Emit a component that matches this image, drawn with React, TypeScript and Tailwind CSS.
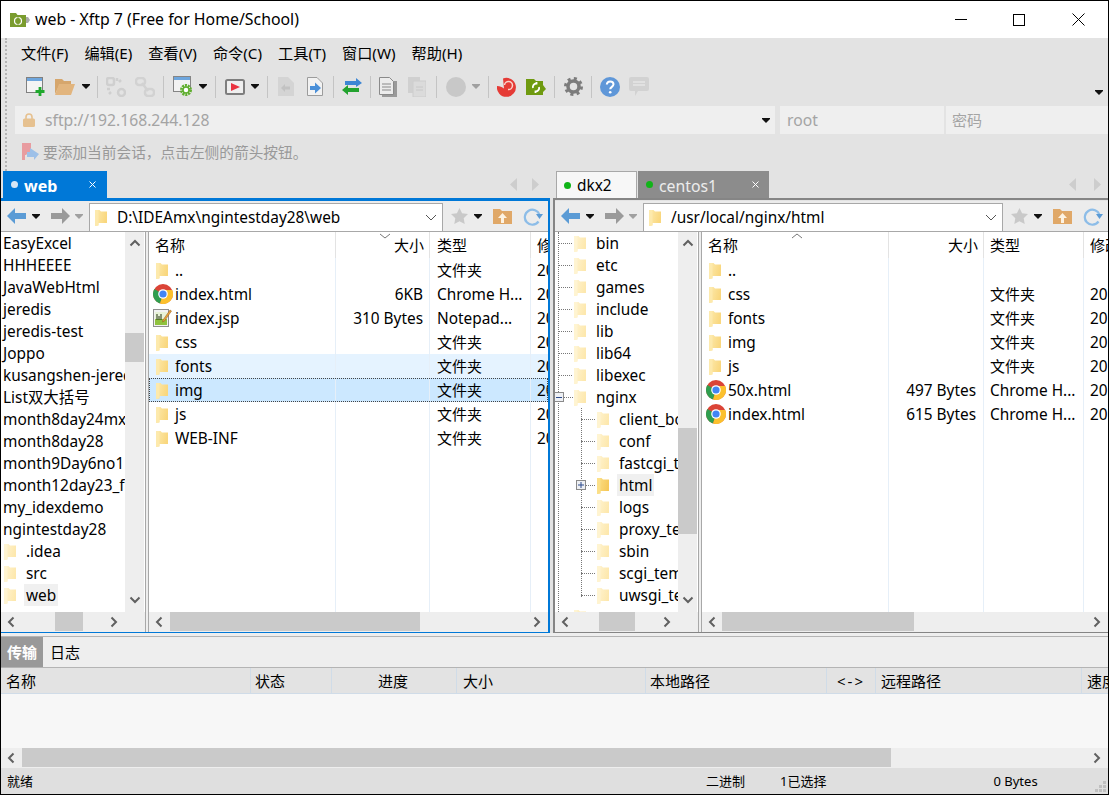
import React from "react";

const Folder = ({ pale = false, strong = false }: { pale?: boolean; strong?: boolean }) => {
  const a = strong ? "#fbe08a" : pale ? "#fff4d2" : "#fdeaae";
  const b = strong ? "#f6c95a" : pale ? "#fde8ae" : "#f9d77e";
  const id = strong ? "fs" : pale ? "fp" : "fn";
  return (
    <svg width="12" height="17" viewBox="0 0 12 17" className="shrink-0">
      <defs>
        <linearGradient id={id} x1="0" y1="0" x2="1" y2="0.3">
          <stop offset="0" stopColor={a} />
          <stop offset="1" stopColor={b} />
        </linearGradient>
      </defs>
      <path d="M0 1h4.5l1.5 1.5H12V14H3.5v2.5L0 17z" fill={`url(#${id})`} />
      <path d="M0 1h3.5v15L0 17z" fill={a} opacity="0.85" />
    </svg>
  );
};

const Chrome = () => (
  <svg width="20" height="20" viewBox="0 0 20 20" className="shrink-0">
    <circle cx="10" cy="10" r="10" fill="#db4437" />
    <path d="M10 10 1.3 5A10 10 0 0 0 7 19.5z" fill="#2f9e4f" />
    <path d="M10 6H19.2A10 10 0 0 1 7 19.5L10 10z" fill="#fbc02d" />
    <circle cx="10" cy="10" r="4.8" fill="#fff" />
    <circle cx="10" cy="10" r="3.6" fill="#4285f4" />
  </svg>
);

const Notepad = () => (
  <svg width="19" height="20" viewBox="0 0 19 20" className="shrink-0">
    <rect x="0.5" y="1.5" width="15" height="17" fill="#f2f2f2" stroke="#8e8e8e" />
    <rect x="2" y="4" width="12" height="13" fill="#e8f2d8" />
    <rect x="2" y="11" width="12" height="6" fill="#8fc23e" />
    <path d="M4 6v6M6 8v4M8 6v6" stroke="#22330f" strokeWidth="1" />
    <path d="M10 12 17 2l1.5 1-7 10-2 1z" fill="#e9a23b" stroke="#8c5a1c" strokeWidth="0.5" />
  </svg>
);

const Dd = ({ light = false }: { light?: boolean }) => (
  <svg width="8" height="5" viewBox="0 0 8 5" className="shrink-0">
    <path d="M0 0h8v1L4 5 0 1z" fill={light ? "#a0a0a0" : "#111"} />
  </svg>
);

const Sep = ({ className }: { className: string }) => (
  <div className={`w-px h-[22px] bg-[#c4c4c4] shrink-0 ${className}`} />
);

const ChevH = ({ right = false }: { right?: boolean }) => (
  <svg width="8" height="12" viewBox="0 0 8 12" className="shrink-0">
    <path d={right ? "M1.5 1.5 6 6l-4.5 4.5" : "M6.5 1.5 2 6l4.5 4.5"} fill="none" stroke="#606060" strokeWidth="2" />
  </svg>
);

const ChevV = ({ up = false }: { up?: boolean }) => (
  <svg width="12" height="8" viewBox="0 0 12 8" className="shrink-0">
    <path d={up ? "M1.5 6.5 6 2l4.5 4.5" : "M1.5 1.5 6 6l4.5-4.5"} fill="none" stroke="#606060" strokeWidth="2" />
  </svg>
);

const Tri = ({ right = false }: { right?: boolean }) => (
  <svg width="7" height="13" viewBox="0 0 7 13" className="shrink-0">
    <path d={right ? "M0 0l7 6.5L0 13z" : "M7 0L0 6.5 7 13z"} fill="#cdcdcd" />
  </svg>
);

const HScroll = ({ before, thumb, leftPad }: { before: string; thumb: string; leftPad: string }) => (
  <div className="h-[20px] shrink-0 bg-[#eeeeee] flex items-start">
    <div className={`h-[19px] flex items-center shrink-0 ${leftPad}`}>
      <ChevH />
    </div>
    <div className={`shrink-0 ${before}`} />
    <div className={`h-[19px] bg-[#cacaca] shrink-0 ${thumb}`} />
    <div className="flex-1" />
    <div className="h-[19px] flex items-center pr-[7px]">
      <ChevH right />
    </div>
  </div>
);

const VScroll = ({ before, thumb }: { before: string; thumb: string }) => (
  <div className="w-[19px] mr-px shrink-0 bg-[#eeeeee] flex flex-col items-center h-full">
    <div className="h-[22px] flex items-center shrink-0">
      <ChevV up />
    </div>
    <div className={`w-full shrink-0 ${before}`} />
    <div className={`w-full bg-[#cacaca] shrink-0 ${thumb}`} />
    <div className="flex-1" />
    <div className="h-[24px] flex items-center shrink-0">
      <ChevV />
    </div>
  </div>
);

type FileRow = {
  n: string;
  s?: string;
  t: string;
  icon: "folder" | "chrome" | "note";
  state?: "hover" | "sel";
};

const leftFiles: FileRow[] = [
  { n: "..", t: "文件夹", icon: "folder" },
  { n: "index.html", s: "6KB", t: "Chrome H...", icon: "chrome" },
  { n: "index.jsp", s: "310 Bytes", t: "Notepad...", icon: "note" },
  { n: "css", t: "文件夹", icon: "folder" },
  { n: "fonts", t: "文件夹", icon: "folder", state: "hover" },
  { n: "img", t: "文件夹", icon: "folder", state: "sel" },
  { n: "js", t: "文件夹", icon: "folder" },
  { n: "WEB-INF", t: "文件夹", icon: "folder" },
];

const rightFiles: FileRow[] = [
  { n: "..", t: "", icon: "folder" },
  { n: "css", t: "文件夹", icon: "folder" },
  { n: "fonts", t: "文件夹", icon: "folder" },
  { n: "img", t: "文件夹", icon: "folder" },
  { n: "js", t: "文件夹", icon: "folder" },
  { n: "50x.html", s: "497 Bytes", t: "Chrome H...", icon: "chrome" },
  { n: "index.html", s: "615 Bytes", t: "Chrome H...", icon: "chrome" },
];

const FileList = ({
  files,
  wide,
  caret,
  thumb,
  before,
}: {
  files: FileRow[];
  wide: boolean;
  caret: React.ReactNode;
  thumb: string;
  before: string;
}) => {
  const cs = wide ? "w-[95px]" : "w-[94px]";
  const ct = wide ? "w-[100px]" : "w-[101px]";
  const sizePad = wide ? "pr-[7px]" : "pr-[6px]";
  const typePad = wide ? "pl-[6px]" : "pl-[7px]";
  const line = "border-r border-[#e6eff8]";
  return (
    <div className="flex-1 min-w-0 flex flex-col bg-white overflow-hidden">
      <div className="h-[26px] shrink-0 flex items-center relative text-[15px]">
        <div className="w-[187px] shrink-0 h-full flex items-center pl-[6px] border-r border-[#e3e3e3]">名称</div>
        {caret}
        <div className={`${cs} shrink-0 h-full flex items-center justify-end pr-[5px] border-r border-[#e3e3e3]`}>大小</div>
        <div className={`${ct} shrink-0 h-full flex items-center ${typePad} border-r border-[#e3e3e3]`}>类型</div>
        <div className="flex-1 h-full flex items-center pl-[6px] whitespace-nowrap overflow-hidden">修改时间</div>
      </div>
      <div className="flex-1 min-h-0 flex flex-col">
        {files.map((f) => (
          <div
            key={f.n}
            className={`h-[24px] shrink-0 flex items-center ${
              f.state === "hover"
                ? "bg-[#e5f3ff]"
                : f.state === "sel"
                ? "bg-[#cce8ff] outline-1 -outline-offset-1 outline-dotted outline-[#444444]"
                : ""
            }`}
          >
            <div className={`w-[187px] shrink-0 h-full flex items-center ${line}`}>
              <div className={`w-[26px] shrink-0 flex items-center ${f.icon === "folder" ? "pl-[7px]" : "pl-[4px]"}`}>
                {f.icon === "folder" ? <Folder /> : f.icon === "chrome" ? <Chrome /> : <Notepad />}
              </div>
              <span className="whitespace-nowrap pt-[2px]">{f.n}</span>
            </div>
            <div className={`${cs} shrink-0 h-full flex items-center justify-end whitespace-nowrap pt-[2px] ${sizePad} ${line}`}>{f.s}</div>
            <div className={`${ct} shrink-0 h-full flex items-center whitespace-nowrap overflow-hidden ${typePad} ${line} ${f.t === "文件夹" ? "text-[15px]" : "pt-[2px]"}`}>{f.t}</div>
            <div className="flex-1 h-full flex items-center pl-[6px] pt-[2px] whitespace-nowrap overflow-hidden">
              {f.n === ".." && !f.t ? "" : "20"}
            </div>
          </div>
        ))}
        <div className="flex-1 min-h-0 flex">
          <div className={`w-[187px] shrink-0 ${line}`} />
          <div className={`${cs} shrink-0 ${line}`} />
          <div className={`${ct} shrink-0 ${line}`} />
        </div>
      </div>
      <HScroll before={before} thumb={thumb} leftPad="pl-[6px] pr-[5px]" />
    </div>
  );
};

const leftTree = [
  "EasyExcel",
  "HHHEEEE",
  "JavaWebHtml",
  "jeredis",
  "jeredis-test",
  "Joppo",
  "kusangshen-jeredis",
  "List双大括号",
  "month8day24mxjk",
  "month8day28",
  "month9Day6no1",
  "month12day23_f",
  "my_idexdemo",
  "ngintestday28",
];

const rightTop = ["bin", "etc", "games", "include", "lib", "lib64", "libexec"];
const rightKids = ["client_body", "conf", "fastcgi_temp", "html", "logs", "proxy_temp", "sbin", "scgi_temp", "uwsgi_temp"];

const Nav = ({ path }: { path: string }) => (
  <div className="h-[30px] shrink-0 bg-[#ececec] flex items-center">
    <svg width="19" height="16" viewBox="0 0 19 16" className="ml-[6px] shrink-0">
      <path d="M0 8 8 0v5h11v6H8v5z" fill="#5b9bd5" />
    </svg>
    <div className="ml-[6px]"><Dd /></div>
    <svg width="19" height="16" viewBox="0 0 19 16" className="ml-[11px] shrink-0">
      <path d="M19 8 11 0v5H0v6h11v5z" fill="#9a9a9a" />
    </svg>
    <div className="ml-[5px]"><Dd light /></div>
    <div className="ml-[6px] flex-1 min-w-0 h-[28px] self-end bg-white border-x border-t border-[#a8a8a8] flex items-center pl-[5px] pr-[5px]">
      <Folder />
      <span className="ml-[10px] flex-1 whitespace-nowrap">{path}</span>
      <svg width="12" height="7" viewBox="0 0 12 7" className="shrink-0">
        <path d="M1 1l5 5 5-5" fill="none" stroke="#555" strokeWidth="1" />
      </svg>
    </div>
    <svg width="17" height="16" viewBox="0 0 17 16" className="ml-[8px] shrink-0">
      <path d="M8.5 0l2.6 5.3 5.9.8-4.3 4.1 1 5.8-5.2-2.8L3.300 16l1-5.800L0 6.100l5.900-.8z" fill="#c9c9c9" />
    </svg>
    <div className="ml-[6px]"><Dd /></div>
    <svg width="19" height="16" viewBox="0 0 19 16" className="ml-[11px] shrink-0">
      <path d="M0 1h7l2 2h10v13H0z" fill="#e0a868" />
      <path d="M9.500 5 14 10h-3v5H8v-5H5z" fill="#fdf3e3" />
    </svg>
    <svg width="20" height="19" viewBox="0 0 20 19" className="ml-[11px] mr-[5px] shrink-0">
      <path d="M16.500 8A7.500 7.500 0 1 0 15.500 14.500" fill="none" stroke="#8dbde8" strokeWidth="2.200" />
      <path d="M13 7h7l-3.500 5z" fill="#5b9bd5" />
    </svg>
  </div>
);

const menus = ["文件(F)", "编辑(E)", "查看(V)", "命令(C)", "工具(T)", "窗口(W)", "帮助(H)"];

export default function App() {
  return (
    <div className="w-[1109px] h-[795px] flex flex-col overflow-hidden border border-black bg-[#e3e3e3] text-[15.4px] leading-[20px] text-black font-['Noto_Sans','Noto_Sans_CJK_SC',sans-serif]">
      {/* title bar */}
      <div className="h-[37px] shrink-0 bg-white flex items-center">
        <svg width="20" height="14" viewBox="0 0 20 14" className="ml-[9px] shrink-0">
          <path d="M0 0h6l1.500 2H16v12H0z" fill="#7a9c2e" />
          <path d="M16 4h2l2 3-2 3h-2z" fill="#a9a9a9" />
          <circle cx="8" cy="8" r="3.500" fill="none" stroke="#fff" strokeWidth="1.200" />
          <path d="M8 4v8" stroke="#7a9c2e" strokeWidth="1" />
        </svg>
        <span className="ml-[5px] pb-[2px] text-[15.85px] whitespace-nowrap">web - Xftp 7 (Free for Home/School)</span>
        <div className="ml-auto flex h-full">
          <div className="w-[58px] flex items-center justify-center">
            <div className="w-[12px] h-px bg-black" />
          </div>
          <div className="w-[58px] flex items-center justify-center">
            <div className="w-[12px] h-[12px] border border-black" />
          </div>
          <div className="w-[60px] flex items-center justify-center">
            <svg width="13" height="13" viewBox="0 0 13 13">
              <path d="M.5.500l12 12M12.500.500l-12 12" stroke="#000" strokeWidth="1" />
            </svg>
          </div>
        </div>
      </div>

      {/* bars */}
      <div className="h-[133px] shrink-0 flex">
        <div className="ml-[4px] w-[2px] h-full border-l-2 border-dotted border-[#b4b4b4] shrink-0" />
        <div className="flex-1 min-w-0 flex flex-col">
          <div className="h-[32px] shrink-0 flex items-center gap-[16px] pl-[14px] pb-[2px] text-[15.2px]">
            {menus.map((m) => (
              <span key={m} className="whitespace-nowrap">{m}</span>
            ))}
          </div>
          <div className="h-[36px] shrink-0 flex items-center pb-[3px]">
            <svg width="20" height="20" viewBox="0 0 20 20" className="ml-[19px] shrink-0">
              <rect x="0.500" y="0.500" width="16" height="15" fill="#f4f4f4" stroke="#808080" />
              <rect x="1" y="1" width="15" height="3" fill="#6ea6de" />
              <path d="M14 10v9M9.500 14.500h9" stroke="#1fa82d" strokeWidth="2.800" />
            </svg>
            <svg width="20" height="16" viewBox="0 0 20 16" className="ml-[9px] shrink-0">
              <path d="M0 0h7l2 2h7v3H5L0 15z" fill="#d6a66c" />
              <path d="M4 5h16l-4 11H0z" fill="#e2b57e" />
            </svg>
            <div className="ml-[7px]"><Dd /></div>
            <Sep className="ml-[7px]" />
            <svg width="20" height="20" viewBox="0 0 20 20" className="ml-[8px] shrink-0">
              <g fill="none" stroke="#cfcfcf" strokeWidth="2.500">
                <rect x="1" y="1" width="7" height="7" rx="2" />
                <rect x="12" y="12" width="7" height="7" rx="3.500" />
                <path d="M11 1v3M15 3l-2 2M1 12h3M3 17l2-2" />
              </g>
            </svg>
            <svg width="20" height="20" viewBox="0 0 20 20" className="ml-[9px] shrink-0">
              <g fill="none" stroke="#d2d2d2" strokeWidth="2.500">
                <rect x="1" y="1" width="9" height="7" rx="3" />
                <rect x="10" y="12" width="9" height="7" rx="3" />
                <path d="M7 6l6 8" />
              </g>
            </svg>
            <Sep className="ml-[8px]" />
            <svg width="20" height="21" viewBox="0 0 20 21" className="ml-[9px] shrink-0">
              <rect x="0.500" y="0.500" width="17" height="15" fill="#f2f2f2" stroke="#858585" />
              <rect x="1" y="1" width="16" height="3" fill="#6ea6de" />
              <circle cx="13" cy="14" r="4.500" fill="#fff" stroke="#5fae2e" strokeWidth="3" strokeDasharray="2 0.800" />
              <circle cx="13" cy="14" r="3" fill="none" stroke="#5fae2e" strokeWidth="1.500" />
            </svg>
            <div className="ml-[6px]"><Dd /></div>
            <Sep className="ml-[8px]" />
            <svg width="20" height="16" viewBox="0 0 20 16" className="ml-[9px] shrink-0">
              <rect x="1" y="1" width="18" height="14" rx="1.500" fill="#efefef" stroke="#7e7e7e" strokeWidth="2" />
              <path d="M6 4l9 4-9 4z" fill="#ea3340" />
            </svg>
            <div className="ml-[6px]"><Dd /></div>
            <Sep className="ml-[8px]" />
            <svg width="16" height="19" viewBox="0 0 16 19" className="ml-[10px] shrink-0">
              <path d="M0 0h10l6 6v13H0z" fill="#d4d4d4" />
              <path d="M3 11l4-4v2.500h5v3H7V15z" fill="#c2c2c2" />
            </svg>
            <svg width="16" height="19" viewBox="0 0 16 19" className="ml-[13px] shrink-0">
              <path d="M.5.500h9.500l5.500 5.500v12.500H.500z" fill="#f2f2f2" stroke="#9c9c9c" />
              <path d="M14 11 8 5.500V9H3v4h5v3.500z" fill="#4a8fd8" />
            </svg>
            <Sep className="ml-[10px]" />
            <svg width="20" height="17" viewBox="0 0 20 17" className="ml-[8px] shrink-0">
              <path d="M3 3h11V0l6 5-6 4V7H3z" fill="#3d86d4" />
              <path d="M17 10H6V7L0 12l6 5v-3h11z" fill="#23a32f" />
            </svg>
            <Sep className="ml-[8px]" />
            <svg width="18" height="20" viewBox="0 0 18 20" className="ml-[8px] shrink-0">
              <rect x="3" y="4" width="15" height="16" fill="#9a9a9a" />
              <path d="M.5.500h10l4 4v13H.500z" fill="#ececec" stroke="#8a8a8a" />
              <path d="M3 7h9M3 10h9M3 13h9" stroke="#8a8a8a" />
            </svg>
            <svg width="18" height="20" viewBox="0 0 18 20" className="ml-[11px] shrink-0">
              <rect x="0" y="0" width="12" height="16" fill="#d0d0d0" />
              <rect x="5" y="4" width="13" height="16" fill="#dbdbdb" stroke="#cdcdcd" />
              <path d="M8 10h7M8 13h7" stroke="#c8c8c8" />
            </svg>
            <Sep className="ml-[10px]" />
            <svg width="20" height="20" viewBox="0 0 20 20" className="ml-[9px] shrink-0">
              <circle cx="10" cy="10" r="10" fill="#c8c8c8" />
            </svg>
            <div className="ml-[6px]"><Dd light /></div>
            <Sep className="ml-[8px]" />
            <svg width="20" height="20" viewBox="0 0 20 20" className="ml-[8px] shrink-0">
              <path d="M6 1.500A9.500 9.500 0 1 1 0 9C3 9 5 10 7 11.500z" fill="#e53b36" />
              <path d="M7.500 8a4 4 0 1 1 3.500 4.500" fill="none" stroke="#fbd4cc" strokeWidth="1.500" />
            </svg>
            <svg width="20" height="16" viewBox="0 0 20 16" className="ml-[9px] shrink-0">
              <path d="M0 0h8l2 2h7v4l3 4-3 3v3H0z" fill="#6f9a10" />
              <path d="M7 9a3.500 3.500 0 0 1 3.500-4.500V3M13 8a3.500 3.500 0 0 1-3.500 4.500V14" fill="none" stroke="#fff" strokeWidth="1.800" />
            </svg>
            <Sep className="ml-[8px]" />
            <svg width="19" height="19" viewBox="0 0 19 19" className="ml-[9px] shrink-0">
              <circle cx="9.500" cy="9.500" r="5.500" fill="none" stroke="#7c7c7c" strokeWidth="3.500" />
              <circle cx="9.500" cy="9.500" r="8" fill="none" stroke="#7c7c7c" strokeWidth="3" strokeDasharray="3 3.300" />
            </svg>
            <Sep className="ml-[8px]" />
            <svg width="20" height="20" viewBox="0 0 20 20" className="ml-[8px] shrink-0">
              <circle cx="10" cy="10" r="10" fill="#5f97d8" />
              <path d="M6.800 7.500C7 5.500 8.300 4.500 10.200 4.500c2 0 3.300 1.200 3.300 2.800 0 2.500-3.300 2.600-3.300 5" fill="none" stroke="#fff" strokeWidth="2" />
              <circle cx="10.200" cy="15.200" r="1.300" fill="#fff" />
            </svg>
            <svg width="20" height="19" viewBox="0 0 20 19" className="ml-[9px] shrink-0">
              <path d="M2 0h16a2 2 0 0 1 2 2v10a2 2 0 0 1-2 2H9l-3 5v-5H2a2 2 0 0 1-2-2V2a2 2 0 0 1 2-2z" fill="#d2d2d2" />
              <path d="M4 5h12M4 8h12" stroke="#e6e6e6" strokeWidth="1.500" />
            </svg>
            <div className="ml-auto mr-[5px] self-end mb-[8px]"><Dd /></div>
          </div>
          <div className="h-[28px] shrink-0 flex ml-[8px] text-[#a4a4a4]">
            <div className="w-[760px] shrink-0 bg-[#efefef] flex items-center pl-[8px] pr-[5px]">
              <svg width="12" height="14" viewBox="0 0 12 14" className="shrink-0">
                <path d="M3 6V4a3 3 0 0 1 6 0v2" fill="none" stroke="#e6c190" strokeWidth="1.600" />
                <rect x="0" y="5.500" width="12" height="8.500" rx="1.500" fill="#e6c190" />
              </svg>
              <span className="ml-[10px] text-[15.7px]">sftp://192.168.244.128</span>
              <div className="ml-auto"><Dd /></div>
            </div>
            <div className="ml-[5px] w-[164px] shrink-0 bg-[#efefef] flex items-center pl-[7px] text-[15.7px]">root</div>
            <div className="ml-[2px] flex-1 bg-[#efefef] flex items-center pl-[6px] text-[15px]">密码</div>
          </div>
          <div className="flex-1 flex items-center pl-[15px] pb-[1px] text-[14.7px] text-[#999999]">
            <svg width="17" height="18" viewBox="0 0 17 18" className="shrink-0">
              <path d="M0 0h9v8l-4 3-1 1H0z" fill="#e89ca0" />
              <path d="M0 12V0h3v17H0z" fill="#e89ca0" />
              <path d="M8 5l9 6-5 6v-3H5V9h3z" fill="#9dc0e8" />
            </svg>
            <span className="ml-[4px] whitespace-nowrap">要添加当前会话，点击左侧的箭头按钮。</span>
          </div>
        </div>
      </div>

      {/* panels */}
      <div className="h-[462px] shrink-0 flex">
        {/* left */}
        <div className="w-[549px] shrink-0 flex flex-col">
          <div className="h-[27px] shrink-0 flex items-end pl-[2px]">
            <div className="w-[104px] h-[27px] bg-[#0078d7] flex items-center text-white">
              <div className="ml-[8px] w-[7px] h-[7px] rounded-full bg-[#d6e6f5]" />
              <span className="ml-[6px] pt-[2px] font-bold text-[16px]">web</span>
              <svg width="7" height="7" viewBox="0 0 7 7" className="ml-auto mr-[11px]">
                <path d="M.5.500l6 6M6.500.500l-6 6" stroke="#fff" />
              </svg>
            </div>
            <div className="ml-auto flex items-center gap-[15px] mr-[11px] h-[27px]">
              <Tri />
              <Tri right />
            </div>
          </div>
          <div className="flex-1 min-h-0 flex flex-col border-t-[3px] border-r-2 border-b border-[#0078d7]">
            <Nav path="D:\IDEAmx\ngintestday28\web" />
            <div className="h-px shrink-0 bg-[#a8a8a8]" />
            <div className="flex-1 min-h-0 flex bg-[#eeeeee]">
              <div className="w-[144px] shrink-0 flex flex-col">
                <div className="h-[380px] shrink-0 flex bg-white">
                  <div className="flex-1 min-w-0 overflow-hidden">
                    {leftTree.map((t) => (
                      <div key={t} className="h-[22px] flex items-center pl-[2px] pt-[2px] whitespace-nowrap">{t}</div>
                    ))}
                    {[".idea", "src", "web"].map((t) => (
                      <div key={t} className="h-[22px] flex items-center pl-[3px] whitespace-nowrap">
                        <Folder pale />
                        <span className={`ml-[8px] h-full flex items-center px-[2px] pt-[2px] ${t === "web" ? "bg-[#f0f0f0]" : ""}`}>{t}</span>
                      </div>
                    ))}
                  </div>
                  <VScroll before="h-[79px]" thumb="h-[29px]" />
                </div>
                <div className="flex">
                  <div className="w-[124px] shrink-0">
                    <HScroll before="w-[35px]" thumb="w-[28px]" leftPad="pl-[6px] pr-[5px]" />
                  </div>
                </div>
              </div>
              <div className="w-[4px] shrink-0 border-x border-[#a8a8a8]" />
              <FileList
                files={leftFiles}
                wide={false}
                before="w-[2px]"
                thumb="w-[250px]"
                caret={
                  <svg width="12" height="6" viewBox="0 0 12 6" className="absolute left-[230px] top-[1px]">
                    <path d="M1 1l5 4 5-4" fill="none" stroke="#777" />
                  </svg>
                }
              />
            </div>
          </div>
        </div>

        <div className="w-[3px] shrink-0" />

        {/* right */}
        <div className="flex-1 min-w-0 flex flex-col">
          <div className="h-[27px] shrink-0 flex items-end pl-[3px]">
            <div className="w-[81px] h-[27px] bg-[#f7f7f7] border-x border-t border-[#a8a8a8] flex items-center">
              <div className="ml-[7px] w-[7px] h-[7px] rounded-full bg-[#10b418]" />
              <span className="ml-[6px] pt-[2px]">dkx2</span>
            </div>
            <div className="ml-px w-[131px] h-[27px] bg-[#8c8c8c] flex items-center text-[#ececec]">
              <div className="ml-[8px] w-[7px] h-[7px] rounded-full bg-[#10b418]" />
              <span className="ml-[6px] pt-[2px] text-[15.8px]">centos1</span>
              <svg width="7" height="7" viewBox="0 0 7 7" className="ml-auto mr-[10px]">
                <path d="M.5.500l6 6M6.500.500l-6 6" stroke="#fff" />
              </svg>
            </div>
            <div className="ml-auto flex items-center gap-[18px] mr-[7px] h-[27px]">
              <Tri />
              <Tri right />
            </div>
          </div>
          <div className="flex-1 min-h-0 flex flex-col border-t-2 border-l-2 border-b border-[#858585]">
            <div className="h-px shrink-0 bg-[#e3e3e3]" />
            <Nav path="/usr/local/nginx/html" />
            <div className="h-px shrink-0 bg-[#a8a8a8]" />
            <div className="flex-1 min-h-0 flex bg-[#eeeeee]">
              <div className="w-[143px] shrink-0 flex flex-col">
                <div className="h-[380px] shrink-0 flex bg-white">
                  <div className="flex-1 min-w-0 overflow-hidden relative">
                    <div className="absolute left-[3px] top-0 bottom-0 border-l border-dotted border-[#777777]" />
                    <div className="absolute left-[26px] top-[176px] h-[189px] border-l border-dotted border-[#777777]" />
                    {rightTop.map((t) => (
                      <div key={t} className="relative h-[22px] flex items-center pl-[19px] whitespace-nowrap">
                        <div className="absolute left-[3px] top-[11px] w-[14px] border-t border-dotted border-[#777777]" />
                        <Folder pale />
                        <span className="ml-[10px] pt-[2px]">{t}</span>
                      </div>
                    ))}
                    <div className="relative h-[22px] flex items-center pl-[19px] whitespace-nowrap">
                      <div className="absolute left-[9px] top-[11px] w-[9px] border-t border-dotted border-[#777777]" />
                      <div className="absolute left-[-1px] top-[6px] w-[10px] h-[10px] border border-[#8a8a8a] bg-[#eef0f4] flex items-center justify-center">
                        <div className="w-[6px] h-px bg-[#2c4a8c]" />
                      </div>
                      <Folder pale />
                      <span className="ml-[10px] pt-[2px]">nginx</span>
                    </div>
                    {rightKids.map((t) => (
                      <div key={t} className="relative h-[22px] flex items-center pl-[42px] whitespace-nowrap">
                        <div className="absolute left-[26px] top-[11px] w-[14px] border-t border-dotted border-[#777777]" />
                        {t === "html" && (
                          <div className="absolute left-[21px] top-[6px] w-[10px] h-[10px] border border-[#8a8a8a] bg-[#eef0f4] flex items-center justify-center">
                            <svg width="6" height="6" viewBox="0 0 6 6"><path d="M0 3h6M3 0v6" stroke="#2c4a8c" /></svg>
                          </div>
                        )}
                        <Folder pale={t !== "html"} strong={t === "html"} />
                        <span className={`ml-[8px] h-full flex items-center px-[2px] pt-[2px] ${t === "html" ? "bg-[#f0f0f0]" : ""}`}>{t}</span>
                      </div>
                    ))}
                    <div className="relative h-[22px] flex items-center pl-[19px]">
                      <Folder pale />
                    </div>
                  </div>
                  <VScroll before="h-[174px]" thumb="h-[106px]" />
                </div>
                <div className="flex">
                  <div className="w-[123px] shrink-0">
                    <HScroll before="w-[21px]" thumb="w-[36px]" leftPad="pl-[6px] pr-[9px]" />
                  </div>
                </div>
              </div>
              <div className="w-[4px] shrink-0 border-x border-[#a8a8a8]" />
              <FileList
                files={rightFiles}
                wide
                before="w-px"
                thumb="w-[192px]"
                caret={
                  <svg width="12" height="6" viewBox="0 0 12 6" className="absolute left-[89px] top-[1px]">
                    <path d="M1 5l5-4 5 4" fill="none" stroke="#777" />
                  </svg>
                }
              />
            </div>
          </div>
        </div>
      </div>

      <div className="h-[3px] shrink-0 bg-[#eeeeee]" />
      <div className="h-px shrink-0 bg-[#b4b4b4]" />

      {/* bottom */}
      <div className="h-[30px] shrink-0 bg-[#eeeeee] flex items-center text-[15px]">
        <div className="w-[42px] h-full bg-[#999999] text-white font-bold flex items-center justify-center">传输</div>
        <span className="ml-[7px]">日志</span>
      </div>
      <div className="h-px shrink-0 bg-[#b4b4b4]" />
      <div className="h-[26px] shrink-0 bg-[#e3e3e3] border-b border-[#d0dce8] flex items-center text-[15px]">
        <div className="w-[250px] h-full shrink-0 border-r border-[#d0dce8] flex items-center pl-[5px]">名称</div>
        <div className="w-[81px] h-full shrink-0 border-r border-[#d0dce8] flex items-center pl-[4px]">状态</div>
        <div className="w-[125px] h-full shrink-0 border-r border-[#d0dce8] flex items-center pl-[46px]">进度</div>
        <div className="w-[189px] h-full shrink-0 border-r border-[#d0dce8] flex items-center pl-[6px]">大小</div>
        <div className="w-[181px] h-full shrink-0 border-r border-[#d0dce8] flex items-center pl-[4px]">本地路径</div>
        <div className="w-[49px] h-full shrink-0 border-r border-[#d0dce8] flex items-center justify-center tracking-[2px]">&lt;-&gt;</div>
        <div className="w-[206px] h-full shrink-0 border-r border-[#d0dce8] flex items-center pl-[5px]">远程路径</div>
        <div className="flex-1 min-w-0 h-full flex items-center pl-[5px] overflow-hidden whitespace-nowrap">速度</div>
      </div>
      <div className="h-[54px] shrink-0 bg-[#f7f7f7]" />
      <HScroll before="w-0" thumb="w-[869px]" leftPad="pl-[6px] pr-[7px]" />
      <div className="flex-1 min-h-0 bg-[#dfdfdf] flex items-center text-[13px] relative">
        <span className="ml-[6px]">就绪</span>
        <span className="ml-[673px]">二进制</span>
        <span className="ml-[35px]">1已选择</span>
        <span className="ml-[167px]">0 Bytes</span>
        <svg width="12" height="12" viewBox="0 0 12 12" className="absolute right-[1px] bottom-[1px]">
          <path d="M8 0h3v3H8zM4 4h3v3H4zM8 4h3v3H8zM0 8h3v3H0zM4 8h3v3H4zM8 8h3v3H8z" fill="#c0c0c0" />
        </svg>
      </div>
    </div>
  );
}
